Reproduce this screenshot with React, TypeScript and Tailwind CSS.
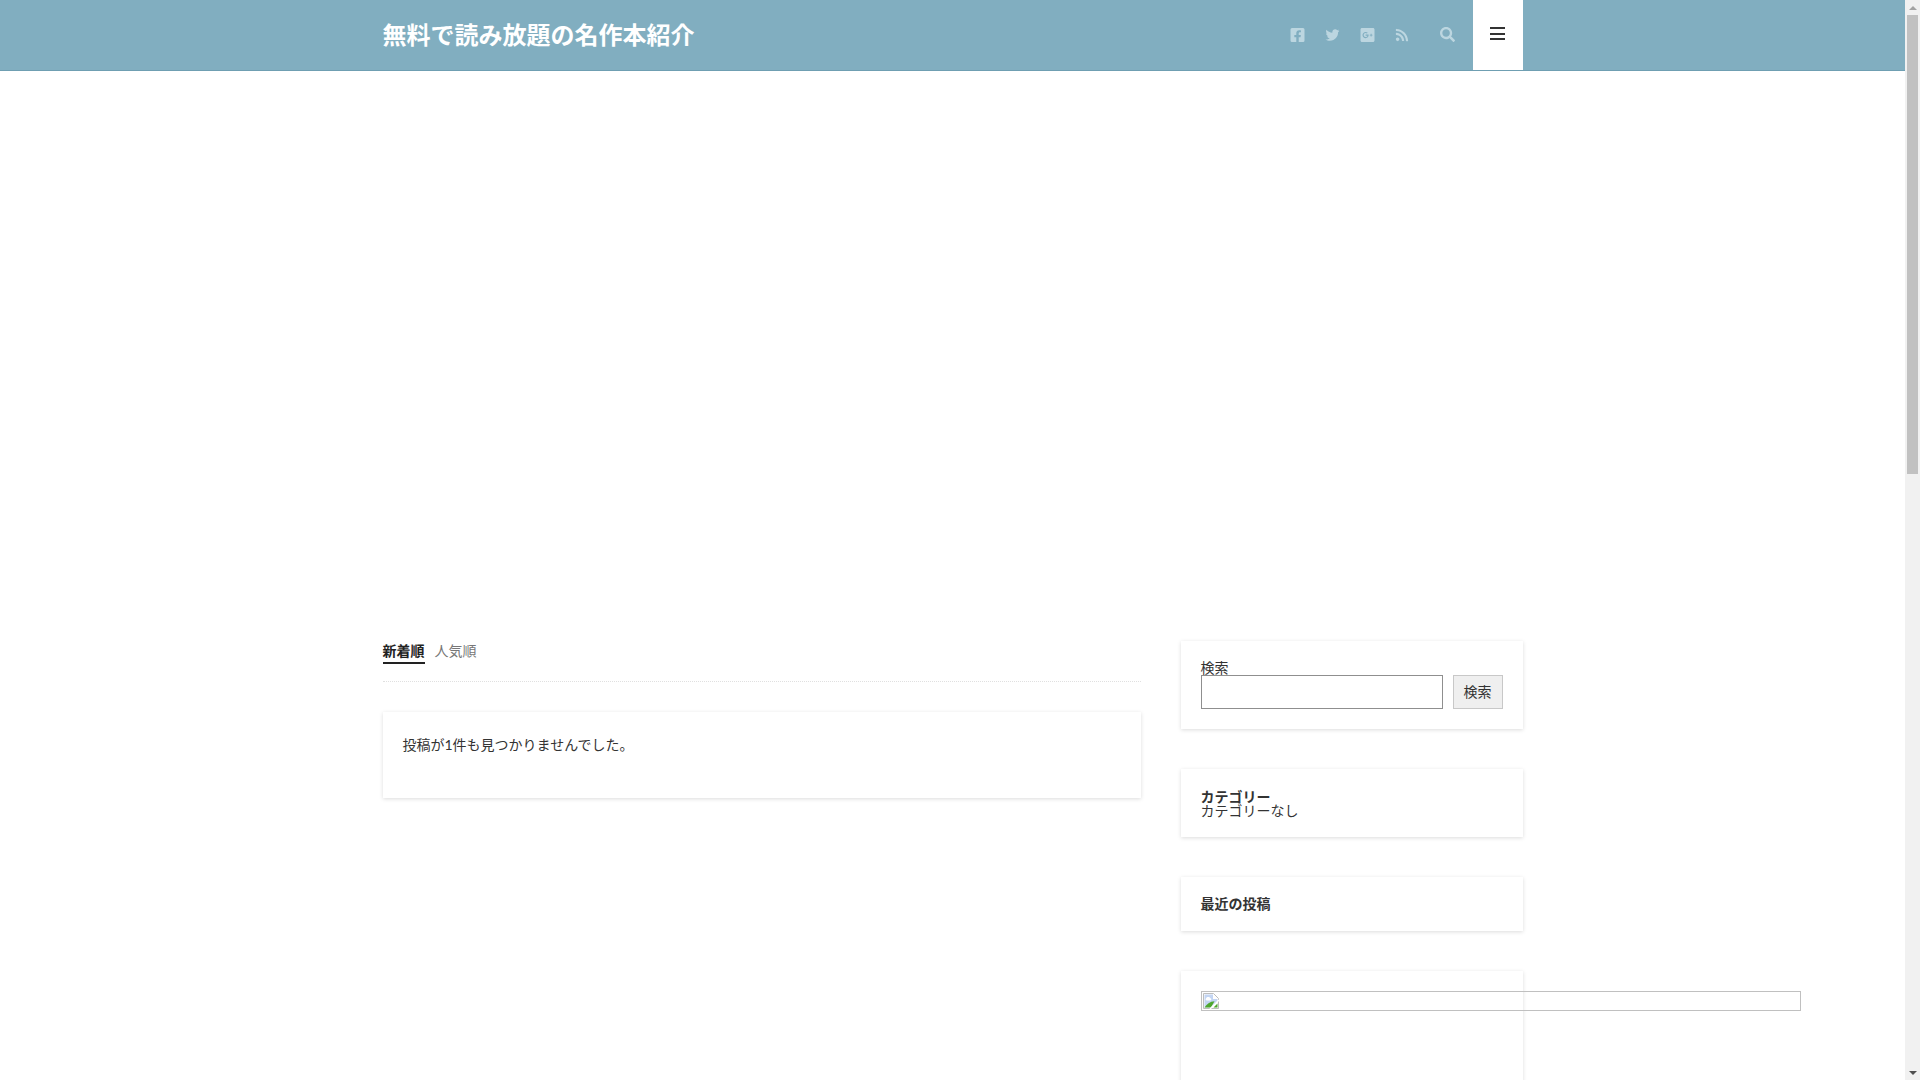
import { FaFacebookSquare, FaTwitter, FaGooglePlusSquare, FaRss, FaSearch } from 'react-icons/fa';

function BrokenImageIcon() {
  return (
    <svg width="16" height="16" viewBox="0 0 16 16" className="block">
      <path d="M0.5 0.5H10.5L15.5 5.5V15.5H0.5Z" fill="#ffffff" stroke="#bdbdbd" />
      <path d="M1.5 1.5H10V6H14.5V9L8 14.5H1.5Z" fill="#c3d5f3" />
      <path d="M3 5.5C3 3.6 6.5 3.4 7.5 5.2C8.8 5.6 8.5 7.5 7 7.5H4C2.6 7.5 2.2 6 3 5.5Z" fill="#ffffff" />
      <path d="M1.5 14.5C3.5 11 7 8.5 11.5 8.2L8 14.5Z" fill="#4fa72f" />
      <path d="M14.5 10.5V14.5H10.5Z" fill="#4fa72f" />
      <path d="M7 16L16 7" stroke="#ffffff" strokeWidth="1.4" />
    </svg>
  );
}

function Card({ className, children }: { className: string; children?: React.ReactNode }) {
  return (
    <div className={`bg-white shadow-[0_1px_4px_rgba(0,0,0,0.14)] ${className}`}>
      {children}
    </div>
  );
}

export default function App() {
  return (
    <div
      className="flex h-screen overflow-hidden bg-white text-[14px] leading-[14px] text-[#333]"
      style={{ fontFamily: 'Lato, "Noto Sans CJK JP", sans-serif' }}
    >
      <div className="flex-1 min-w-0">
        <header className="h-[71px] bg-[#81aec0] border-b border-[#6f9fb2]">
          <div className="w-[1140px] mx-auto h-[70px] flex items-center">
            <h1 className="text-[24px] leading-[70px] font-bold text-white">無料で読み放題の名作本紹介</h1>
            <div className="ml-auto flex items-center h-full text-[#bcd6e0]">
              <div className="flex items-center gap-5 mr-[31px]">
                <FaFacebookSquare className="w-[15px] h-[16px]" />
                <FaTwitter className="w-[15px] h-[14px]" />
                <FaGooglePlusSquare className="w-[15px] h-[16px]" />
                <FaRss className="w-[14px] h-[14px]" />
              </div>
              <FaSearch className="w-[15px] h-[15px] mr-[18px] mb-[1px]" />
              <div className="w-[50px] h-full bg-white flex items-center justify-center pr-[1px]">
                <div className="w-[15px] flex flex-col gap-[3.5px] mb-[3px]">
                  <div className="h-[2px] bg-[#333]" />
                  <div className="h-[2px] bg-[#333]" />
                  <div className="h-[2px] bg-[#333]" />
                </div>
              </div>
            </div>
          </div>
        </header>

        <div className="w-[1140px] mx-auto pt-[570px] flex gap-10">
          <main className="w-[758px]">
            <div className="border-b border-dotted border-[#e0e0e0] h-[41px] flex gap-[10px]">
              <div className="h-[23px] w-[42px] pt-[3px] border-b-2 border-[#222] font-bold text-[#222]">新着順</div>
              <div className="pt-[3px] text-[#777]">人気順</div>
            </div>
            <Card className="mt-[30px] h-[86px] pt-[26px] px-5">
              <p>投稿が1件も見つかりませんでした。</p>
            </Card>
          </main>

          <aside className="w-[342px] flex flex-col gap-10">
            <Card className="h-[88px] px-5 pt-5">
              <label className="block h-[14px]">検索</label>
              <div className="flex gap-[10px]">
                <input className="w-[242px] h-[34px] border border-[#8f8f8f] bg-white" />
                <button className="w-[50px] h-[34px] border border-[#c8c8c8] bg-[#efefef] text-[#333]">検索</button>
              </div>
            </Card>
            <Card className="h-[68px] px-5 pt-[21px]">
              <h3 className="font-bold">カテゴリー</h3>
              <p>カテゴリーなし</p>
            </Card>
            <Card className="h-[54px] px-5 pt-5">
              <h3 className="font-bold">最近の投稿</h3>
            </Card>
            <Card className="h-[200px] px-5 pt-5">
              <div className="w-[600px] h-[20px] border border-[#c0c0c0] p-[1px]">
                <BrokenImageIcon />
              </div>
            </Card>
          </aside>
        </div>
      </div>

      <div className="w-[15px] h-full bg-[#f1f1f1] flex flex-col items-center">
        <div className="h-[15px] flex items-center justify-center">
          <div className="w-0 h-0 border-x-[4px] border-x-transparent border-b-[4px] border-b-[#a3a3a3]" />
        </div>
        <div className="w-[11px] h-[459px] bg-[#c1c1c1]" />
        <div className="mt-auto h-[15px] flex items-center justify-center">
          <div className="w-0 h-0 border-x-[4px] border-x-transparent border-t-[4px] border-t-[#505050]" />
        </div>
      </div>
    </div>
  );
}
